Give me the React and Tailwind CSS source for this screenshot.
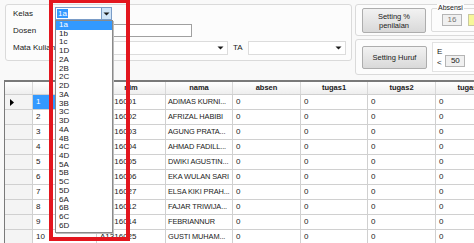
import React from "react";

const Arrow = ({ className = "" }) => (
  <svg width="7" height="4" viewBox="0 0 7 4" className={className}>
    <path d="M0.5 0.5 L6.5 0.5 L3.5 3.5 Z" fill="#1a1a1a" />
  </svg>
);

const rows = [
  ["1", "A1316001", "ADIMAS KURNI..."],
  ["2", "A1316002", "AFRIZAL HABIBI"],
  ["3", "A1316003", "AGUNG PRATA..."],
  ["4", "A1316004", "AHMAD FADILL..."],
  ["5", "A1316005", "DWIKI AGUSTIN..."],
  ["6", "A1316006", "EKA WULAN SARI"],
  ["7", "A1316027", "ELSA KIKI PRAH..."],
  ["8", "A1316012", "FAJAR TRIWIJA..."],
  ["9", "A1316014", "FEBRIANNUR"],
  ["10", "A1316025", "GUSTI MUHAM..."],
];

const kelas = ["1a","1b","1c","1D","2A","2B","2C","2D","3A","3B","3C","3D","4A","4B","4C","4D","5A","5B","5C","5D","6A","6B","6C","6D"];

export default function App() {
  return (
    <div className="relative w-[474px] h-[243px] overflow-hidden bg-[#f9f9f9] text-[8px] text-[#1a1a1a] font-['Liberation_Sans',_Arial,_sans-serif]">
      {/* top area */}
      <div className="flex h-[80px]">
        {/* main groupbox */}
        <div className="ml-[5px] mt-[4px] w-[347px] h-[57px] shrink-0 border border-[#dadada] rounded-[3px] bg-[#fcfcfc] pt-[2px]">
          <div className="flex items-center h-[13px]">
            <div className="w-[49px] pl-[7px]">Kelas</div>
            <div className="w-[57px] h-[13px] border border-[#7a9cc7] bg-white flex items-center">
              <div className="flex-1 pl-[1px]">
                <span className="bg-[#3399ff] text-white px-[1px]">1a</span>
              </div>
              <div className="w-[10px] h-full bg-[#cfe4f8] border-l border-[#7a9cc7] flex items-center justify-center">
                <Arrow />
              </div>
            </div>
          </div>
          <div className="flex items-center h-[13px] mt-[4px]">
            <div className="w-[49px] pl-[7px]">Dosen</div>
            <div className="w-[137px] h-[13px] border border-[#a0a0a0] bg-white" />
          </div>
          <div className="flex items-center h-[14px] mt-[4px]">
            <div className="w-[49px] pl-[7px] whitespace-nowrap">Mata Kuliah</div>
            <div className="w-[173px] h-[14px] border border-[#dcdcdc] bg-white flex items-center justify-end pr-[3px]">
              <Arrow />
            </div>
            <div className="ml-[5px] w-[15px]">TA</div>
            <div className="w-[98px] h-[14px] border border-[#dcdcdc] bg-white flex items-center justify-end pr-[3px]">
              <Arrow />
            </div>
          </div>
        </div>
        {/* right column */}
        <div className="ml-[3px] flex flex-col w-[125px] shrink-0">
          <div className="mt-[4px] h-[32px] border border-[#dadada] rounded-[3px] bg-[#fcfcfc] flex items-start">
            <div className="ml-[6px] mt-[3px] w-[65px] h-[25px] border border-[#adadad] rounded-[2px] bg-gradient-to-b from-[#f2f2f2] to-[#d9d9d9] flex flex-col items-center justify-center leading-[9px] text-[7.5px]">
              <span>Setting %</span>
              <span>penilaian</span>
            </div>
            <div className="relative ml-[5px] mt-[3px] h-[24px] flex-1 border border-[#dcdcdc] rounded-[2px] flex items-start pt-[5px] pl-[10px]">
              <div className="absolute -top-[5px] left-[5px] px-[1px] bg-[#fcfcfc] text-[7px] leading-[8px]">Absensi</div>
              <div className="w-[20px] h-[12px] border border-[#b5b5b5] bg-[#f0f0f0] text-[#777] flex items-center justify-center">16</div>
              <div className="ml-[6px] w-[10px] h-[12px] border border-[#c8c8a0] bg-[#f7f79a]" />
            </div>
          </div>
          <div className="mt-[3px] h-[36px] border border-[#dadada] rounded-[3px] bg-[#fcfcfc] flex items-start">
            <div className="ml-[6px] mt-[6px] w-[65px] h-[23px] border border-[#adadad] rounded-[2px] bg-gradient-to-b from-[#f2f2f2] to-[#d9d9d9] flex items-center justify-center text-[7.5px]">
              Setting Huruf
            </div>
            <div className="ml-[5px] mt-[2px] h-[30px] flex-1 border border-[#e2e2e2] bg-white flex items-center pl-[4px]">
              <div className="flex flex-col leading-[11px] text-[8px]">
                <span>E</span>
                <span>&lt;</span>
              </div>
              <div className="ml-[3px] mt-[8px] w-[20px] h-[12px] border border-[#b5b5b5] bg-[#f0f0f0] flex items-center justify-center">50</div>
            </div>
          </div>
        </div>
      </div>

      {/* grid */}
      <div className="ml-[4px] border-l border-t-2 border-[#7a7a7a] bg-white">
        <div className="flex h-[13px] font-bold text-[7.5px] bg-gradient-to-b from-[#ffffff] to-[#eeeeee] border-b border-[#cfcfcf]">
          <div className="w-[28px] shrink-0 border-r border-[#d8d8d8]" />
          <div className="w-[64px] shrink-0 border-r border-[#d8d8d8]" />
          <div className="w-[69px] shrink-0 border-r border-[#d8d8d8] flex items-center justify-center">nim</div>
          <div className="w-[67px] shrink-0 border-r border-[#d8d8d8] flex items-center justify-center">nama</div>
          <div className="w-[68px] shrink-0 border-r border-[#d8d8d8] flex items-center justify-center">absen</div>
          <div className="w-[67px] shrink-0 border-r border-[#d8d8d8] flex items-center justify-center">tugas1</div>
          <div className="w-[68px] shrink-0 border-r border-[#d8d8d8] flex items-center justify-center">tugas2</div>
          <div className="w-[68px] shrink-0 border-r border-[#d8d8d8] flex items-center justify-center">tugas3</div>
        </div>
        {rows.map(([no, nim, nama], i) => (
          <div key={no} className="flex h-[15px]">
            <div className="w-[28px] shrink-0 border-r border-b border-[#d0d0d0] bg-[#f4f4f4] flex items-center pl-[5px]">
              {i === 0 && (
                <svg width="4" height="7" viewBox="0 0 4 7"><path d="M0 0 L4 3.5 L0 7 Z" fill="#000" /></svg>
              )}
            </div>
            <div className={`w-[64px] shrink-0 border-r border-b border-[#d0d0d0] flex items-center pl-[3px] ${i === 0 ? "bg-[#3399ff] text-white" : ""}`}>{no}</div>
            <div className="w-[69px] shrink-0 border-r border-b border-[#d0d0d0] flex items-center pl-[3px]">{nim}</div>
            <div className="w-[67px] shrink-0 border-r border-b border-[#d0d0d0] flex items-center pl-[2px] whitespace-nowrap overflow-hidden text-[7.4px] tracking-[-0.1px]">{nama}</div>
            <div className="w-[68px] shrink-0 border-r border-b border-[#d0d0d0] flex items-center pl-[3px]">0</div>
            <div className="w-[67px] shrink-0 border-r border-b border-[#d0d0d0] flex items-center pl-[3px]">0</div>
            <div className="w-[68px] shrink-0 border-r border-b border-[#d0d0d0] flex items-center pl-[3px]">0</div>
            <div className="w-[68px] shrink-0 border-r border-b border-[#d0d0d0] flex items-center pl-[3px]">0</div>
          </div>
        ))}
      </div>

      {/* open dropdown list */}
      <div className="absolute left-[55px] top-[20px] w-[58px] h-[213px] bg-white border border-[#8a8a8a] shadow-[1px_1px_0_#bdbdbd]">
        {kelas.map((k, i) => (
          <div key={k} className={`h-[8.74px] leading-[8.74px] pl-[3px] ${i === 0 ? "bg-[#3399ff] text-white" : ""}`}>{k}</div>
        ))}
      </div>

      {/* red highlight rectangle */}
      <div className="absolute left-[49px] top-[-1px] w-[81px] h-[242px] border-[4px] border-[#e3161e]" />
    </div>
  );
}
